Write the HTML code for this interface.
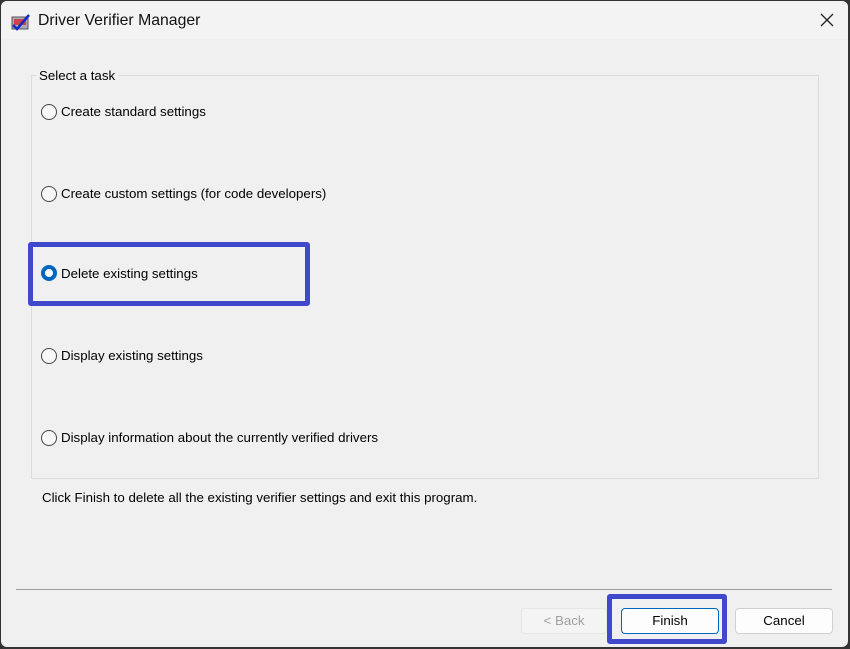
<!DOCTYPE html>
<html><head><style>
body{margin:0;width:850px;height:649px;overflow:hidden;background:#333;font-family:"Liberation Sans",sans-serif;}
.win{position:absolute;left:1px;top:1px;width:847px;height:646px;background:#f0f0f0;border-radius:6px;overflow:hidden;}
.title{position:absolute;left:0;top:0;width:100%;height:38px;background:#f3f3f3;}
.t{position:absolute;font-size:13.3px;color:#000;white-space:nowrap;}
.r{position:absolute;width:14px;height:14px;border:1px solid #444;border-radius:50%;background:#f7f7f7;}
.btn{position:absolute;height:24px;border:1px solid #d0d0d0;border-radius:4px;background:#fdfdfd;font-size:13.3px;text-align:center;line-height:24px;}
.hl{position:absolute;border:5px solid #4048cc;border-radius:3px;}
</style></head><body>
<div class="win">
<div class="title">
<svg style="position:absolute;left:10px;top:12px" width="20" height="18"><rect x="1" y="4" width="16" height="12" fill="#aab" stroke="#555"/><rect x="3" y="6" width="12" height="6" fill="#c44"/><path d="M2 12 L6 16 L18 2" stroke="#1428c8" stroke-width="2.5" fill="none"/></svg>
<div class="t" style="left:37px;top:11px;font-size:15.8px;color:#111">Driver Verifier Manager</div>
<svg style="position:absolute;left:819px;top:12px" width="14" height="14"><path d="M1 1L13 13M13 1L1 13" stroke="#222" stroke-width="1.3"/></svg>
</div>
<div style="position:absolute;left:30px;top:74px;width:786px;height:402px;border:1px solid #dcdcdc;"></div>
<div class="t" style="left:35px;top:67px;background:#f0f0f0;padding:0 3px">Select a task</div>
<div class="r" style="left:40px;top:103px"></div><div class="t" style="left:60px;top:103px">Create standard settings</div>
<div class="r" style="left:40px;top:185px"></div><div class="t" style="left:60px;top:185px">Create custom settings (for code developers)</div>
<div style="position:absolute;left:40px;top:264px;width:8px;height:8px;border:4px solid #0067c0;border-radius:50%;background:#fff"></div><div class="t" style="left:60px;top:265px">Delete existing settings</div>
<div class="r" style="left:40px;top:347px"></div><div class="t" style="left:60px;top:347px">Display existing settings</div>
<div class="r" style="left:40px;top:429px"></div><div class="t" style="left:60px;top:429px">Display information about the currently verified drivers</div>
<div class="hl" style="left:27px;top:241px;width:272px;height:54px"></div>
<div class="t" style="left:41px;top:489px">Click Finish to delete all the existing verifier settings and exit this program.</div>
<div style="position:absolute;left:15px;top:588px;width:816px;height:1px;background:#a0a0a0"></div>
<div class="btn" style="left:520px;top:607px;width:84px;color:#a0a0a0;border-color:#e6e6e6;background:#f4f4f4">&lt; Back</div>
<div class="btn" style="left:620px;top:607px;width:96px;border-color:#0067c0">Finish</div>
<div class="btn" style="left:734px;top:607px;width:96px">Cancel</div>
<div class="hl" style="left:606px;top:593px;width:110px;height:40px"></div>
</div>
</body></html>
